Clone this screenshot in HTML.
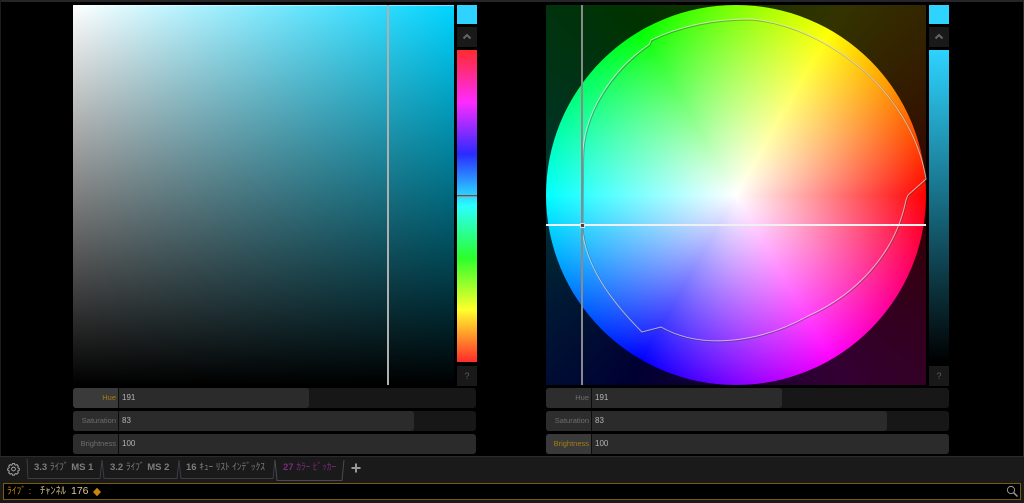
<!DOCTYPE html>
<html><head><meta charset="utf-8">
<style>
html,body{margin:0;padding:0;background:#000;width:1024px;height:503px;overflow:hidden}
body{position:relative;font-family:"Liberation Sans","Noto Sans CJK JP",sans-serif}
.a{position:absolute}
.sl{position:absolute;height:20px;background:#171717;border-radius:3px;overflow:hidden;width:403px}
.sl .f{position:absolute;left:0;top:0;bottom:0;background:#2b2b2b;border-radius:0 3px 3px 0}
.sl .l{position:absolute;left:0;top:0;bottom:0;width:46px;background:#2d2d2d;color:#6e6e6e;font-size:7.5px;line-height:20px;text-align:right;padding-right:2px;box-sizing:border-box;border-right:1px solid #0c0c0c}
.sl .v{position:absolute;left:49px;top:0;line-height:20px;font-size:8px;color:#b4b4b4}
.btn{position:absolute;width:20px;height:20px;background:#191919;color:#5c5c5c;font-size:9px;text-align:center;line-height:20px}
.t{position:absolute;top:461px;font-size:9.5px;font-weight:bold;color:#7c7c7c;white-space:nowrap;line-height:14px}
.t small{font-size:9.5px;font-weight:normal;letter-spacing:-.1px}
</style></head><body>
<div class="a" style="left:0;top:0;width:1024px;height:2px;background:#26262a"></div>
<div class="a" style="left:0;top:0;width:1px;height:503px;background:#1c1c1c"></div>
<div class="a" style="left:1023px;top:0;width:1px;height:503px;background:#2a2a2a"></div>

<!-- left square -->
<div class="a" style="left:73px;top:5px;width:381px;height:380px;background:linear-gradient(to bottom,rgba(0,0,0,0),#000),linear-gradient(to right,#fff,#00d4ff)"></div>
<div class="a" style="left:73px;top:5px;width:381px;height:1px;background:rgba(255,255,255,.45)"></div>
<div class="a" style="left:387px;top:5px;width:2px;height:380px;background:#b0b0b0"></div>

<!-- hue strip -->
<div class="a" style="left:457px;top:5px;width:20px;height:19px;background:#2ed3ff"></div>
<div class="btn" style="left:457px;top:27px"><svg width="20" height="20" style="display:block"><path d="M6.5 11.5L10 8L13.5 11.5" fill="none" stroke="#666" stroke-width="2"/></svg></div>
<div class="a" style="left:457px;top:50px;width:20px;height:312px;background:linear-gradient(to bottom,#ff2b2b,#ff2bff 16.67%,#2b2bff 33.33%,#2bffff 50%,#2bff2b 66.67%,#ffff2b 83.33%,#ff2b2b)"></div>
<div class="a" style="left:457px;top:196px;width:20px;height:1px;background:#a88"></div>
<div class="a" style="left:457px;top:195px;width:20px;height:1px;background:#555"></div>
<div class="btn" style="left:457px;top:366px">?</div>

<!-- right square -->
<div class="a" style="left:546px;top:5px;width:380px;height:380px;overflow:hidden;background:#000">
 <div class="a" style="left:0;top:0;width:380px;height:380px;background:conic-gradient(from 90deg,#f00,#f0f,#00f,#0ff,#0f0,#ff0,#f00);filter:brightness(.2)"></div>
 <div class="a" style="left:0;top:0;width:380px;height:380px;border-radius:50%;background:radial-gradient(circle closest-side,#fff,rgba(255,255,255,0)),conic-gradient(from 90deg,#f00,#f0f,#00f,#0ff,#0f0,#ff0,#f00)"></div>
</div>
<svg class="a" style="left:0;top:0" width="1024" height="503" fill="none">
 <path stroke="rgba(50,50,50,.35)" stroke-width="1.6" transform="translate(0.6,0.7)" d="M582 227L582.7 158C583 110 615 68 649.3 44.3L651 40C682 25 716 19 750 19C790 22 830 42 863 70C893 96 919 135 926 179L908 195L906 200C895 255 855 295 808 316C765 340 705 352 661 327L642 332C610 300 585 265 582 227Z"/>
 <path stroke="rgba(255,255,255,.62)" stroke-width="1" d="M582 227L582.7 158C583 110 615 68 649.3 44.3L651 40C682 25 716 19 750 19C790 22 830 42 863 70C893 96 919 135 926 179L908 195L906 200C895 255 855 295 808 316C765 340 705 352 661 327L642 332C610 300 585 265 582 227Z"/>
</svg>
<div class="a" style="left:581px;top:5px;width:2px;height:380px;background:#8a8a8a"></div>
<div class="a" style="left:546px;top:224px;width:380px;height:2px;background:#f0f0f0"></div>
<div class="a" style="left:580px;top:223px;width:3px;height:3px;background:#444;border:1px solid #ddd"></div>

<!-- brightness strip -->
<div class="a" style="left:929px;top:5px;width:20px;height:19px;background:#2ed3ff"></div>
<div class="btn" style="left:929px;top:27px"><svg width="20" height="20" style="display:block"><path d="M6.5 11.5L10 8L13.5 11.5" fill="none" stroke="#666" stroke-width="2"/></svg></div>
<div class="a" style="left:929px;top:50px;width:20px;height:312px;background:linear-gradient(to bottom,#2ed3ff,#000)"></div>
<div class="btn" style="left:929px;top:366px">?</div>

<!-- left sliders -->
<div class="sl" style="left:73px;top:388px"><div class="f" style="width:236px"></div><div class="l" style="color:#a87c10;background:#3a3a3a">Hue</div><div class="v">191</div></div>
<div class="sl" style="left:73px;top:411px"><div class="f" style="width:341px"></div><div class="l">Saturation</div><div class="v">83</div></div>
<div class="sl" style="left:73px;top:434px"><div class="f" style="width:403px"></div><div class="l">Brightness</div><div class="v">100</div></div>

<!-- right sliders -->
<div class="sl" style="left:546px;top:388px"><div class="f" style="width:236px"></div><div class="l">Hue</div><div class="v">191</div></div>
<div class="sl" style="left:546px;top:411px"><div class="f" style="width:341px"></div><div class="l">Saturation</div><div class="v">83</div></div>
<div class="sl" style="left:546px;top:434px"><div class="f" style="width:403px"></div><div class="l" style="color:#a87c10;background:#3a3a3a">Brightness</div><div class="v">100</div></div>

<!-- bottom panel -->
<div class="a" style="left:0;top:456px;width:1024px;height:47px;background:#1a1a1a;border-top:1px solid #2a2a2a;box-sizing:border-box"></div>

<svg class="a" style="left:0;top:456px" width="1024" height="28" fill="none">
 <g stroke="#aaa" stroke-width="1.3" transform="translate(13.5 13) scale(.72) translate(-13.5 -15)">
  <circle cx="13.5" cy="15" r="2.6"/>
  <path d="M12 7.5h3l.4 1.6 1.3.6 1.5-.8 2 2-.8 1.5.6 1.3 1.5.4v2.8l-1.5.4-.6 1.3.8 1.5-2 2-1.5-.8-1.3.6-.4 1.6h-3l-.4-1.6-1.3-.6-1.5.8-2-2 .8-1.5-.6-1.3-1.5-.4v-2.8l1.5-.4.6-1.3-.8-1.5 2-2 1.5.8 1.3-.6z"/>
 </g>
 <g stroke="#3c3c44" stroke-width="1">
  <path d="M27 2.5L28 22.5H100L102 4"/>
  <path d="M102 4L104 22.5H177L179 4"/>
  <path d="M179 4L181 22.5H273L275 4"/>
 </g>
 <path d="M275 4L277 24.5H342L344 4" stroke="#4a4a55" stroke-width="1"/>
 <path d="M356 7.5v9M351.5 12h9" stroke="#999" stroke-width="2"/>
</svg>

<div class="t" style="left:34px">3.3 <small>ﾗｲﾌﾞ</small> MS 1</div>
<div class="t" style="left:110px">3.2 <small>ﾗｲﾌﾞ</small> MS 2</div>
<div class="t" style="left:186px">16 <small>ｷｭｰ ﾘｽﾄ ｲﾝﾃﾞｯｸｽ</small></div>
<div class="t" style="left:283px;color:#7a2a7a">27 <small>ｶﾗｰ ﾋﾟｯｶｰ</small></div>

<!-- command line -->
<div class="a" style="left:3px;top:483px;width:1018px;height:17px;background:#000;border:1px solid #7a5c10;box-sizing:border-box"></div>
<div class="a" style="left:7px;top:483px;height:17px;line-height:17px;font-size:9.5px;color:#c8860b;white-space:nowrap">ﾗｲﾌﾞ :</div>
<div class="a" style="left:40px;top:483px;height:17px;line-height:17px;font-size:10.4px;color:#c9b98a;white-space:nowrap">ﾁｬﾝﾈﾙ</div>
<div class="a" style="left:71px;top:483px;height:17px;line-height:17px;font-size:10.5px;color:#d8c89a;white-space:nowrap">176</div>
<svg class="a" style="left:92px;top:487px" width="10" height="10"><path d="M5 .8L9 5 5 9.2 1 5z" fill="#c8860b"/></svg>
<svg class="a" style="left:1005px;top:484px" width="14" height="14" fill="none" stroke="#999"><circle cx="6" cy="6" r="3.6" stroke-width="1"/><path d="M8.8 8.8L12.5 12.5" stroke-width="1.5"/></svg>
</body></html>
